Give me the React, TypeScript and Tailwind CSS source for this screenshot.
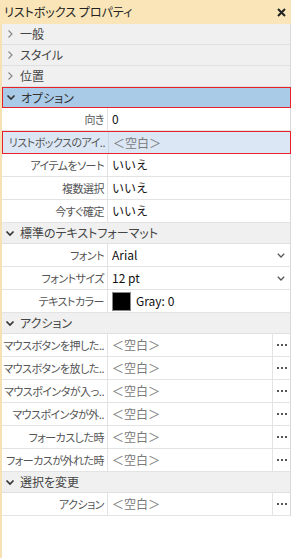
import React from "react";

const font = { fontFamily: '"Noto Sans CJK JP", "Noto Sans", sans-serif' };

function Chevron({ open }: { open: boolean }) {
  return open ? (
    <svg width="10" height="9" viewBox="0 0 10 9" className="shrink-0">
      <path d="M1.5 2.5 L5 6 L8.5 2.5" fill="none" stroke="#333" strokeWidth="1.7" />
    </svg>
  ) : (
    <svg width="10" height="10" viewBox="0 0 10 10" className="shrink-0">
      <path d="M3.5 1.5 L7 5 L3.5 8.5" fill="none" stroke="#8a8a8a" strokeWidth="1.2" />
    </svg>
  );
}

function Header({ title, open, selected }: { title: string; open: boolean; selected?: boolean }) {
  return (
    <div
      className={
        "h-[21px] flex items-center gap-[5px] pl-[3px] text-[12px] leading-none [font-feature-settings:'palt'] " +
        (selected
          ? "bg-[#aacbe7] border border-[#e8202a] text-[#333]"
          : "bg-[#f0f0f0] border-b border-[#e0e0e0] text-[#444] border-r border-r-[#d8d8d8]")
      }
    >
      <Chevron open={open} />
      <span>{title}</span>
    </div>
  );
}

function Dots() {
  return (
    <div className="w-[18px] h-full border-l border-[#e3e3e3] flex items-center justify-center">
      <svg width="10" height="3" viewBox="0 0 10 3">
        <rect x="0" y="0" width="2" height="2" fill="#555" />
        <rect x="4" y="0" width="2" height="2" fill="#555" />
        <rect x="8" y="0" width="2" height="2" fill="#555" />
      </svg>
    </div>
  );
}

function Caret() {
  return (
    <div className="w-[18px] h-full flex items-center justify-center">
      <svg width="8" height="5" viewBox="0 0 8 5">
        <path d="M0.8 0.8 L4 4 L7.2 0.8" fill="none" stroke="#555" strokeWidth="1.3" />
      </svg>
    </div>
  );
}

type RowProps = {
  label: string;
  value?: React.ReactNode;
  empty?: boolean;
  dots?: boolean;
  caret?: boolean;
  selected?: boolean;
};

function Row({ label, value, empty, dots, caret, selected }: RowProps) {
  return (
    <div
      className={
        "h-[23px] flex items-stretch leading-none " +
        (selected
          ? "bg-[#dce7f5] border border-[#e8202a]"
          : "bg-white border-b border-[#e3e3e3] border-r border-r-[#d8d8d8]")
      }
    >
      <div
        className={
          "w-[106px] shrink-0 flex items-center justify-end pr-[3px] text-[11px] tracking-[-0.5px] text-[#555] border-r whitespace-nowrap [font-feature-settings:'palt'] " +
          (selected ? "border-[#c9d5e3]" : "border-[#e3e3e3]")
        }
      >
        {label}
      </div>
      <div className="flex-1 flex items-center pl-[4px] text-[12px] whitespace-nowrap overflow-hidden">
        {empty ? (
          <span className="text-[#7a7a7a]">＜空白＞</span>
        ) : (
          <span className="text-[#111]">{value}</span>
        )}
      </div>
      {dots && <Dots />}
      {caret && <Caret />}
    </div>
  );
}

export default function App() {
  return (
    <div className="w-[291px] h-[558px] bg-white flex flex-col overflow-hidden" style={font}>
      <div className="h-[24px] shrink-0 bg-[#f9e5b8] flex items-center justify-between pl-[4px] pr-[4px]">
        <span className="text-[12px] text-[#222] leading-none [font-feature-settings:'palt']">リストボックス プロパティ</span>
        <svg width="9" height="9" viewBox="0 0 9 9" className="mr-[1px]">
          <path d="M1 1 L8 8 M8 1 L1 8" stroke="#222" strokeWidth="2" />
        </svg>
      </div>
      <div className="flex-1 border-l-2 border-[#f6e1b4] flex flex-col">
        <Header title="一般" open={false} />
        <Header title="スタイル" open={false} />
        <Header title="位置" open={false} />
        <Header title="オプション" open={true} selected />
        <Row label="向き" value="0" />
        <Row label="リストボックスのアイ.." empty selected />
        <Row label="アイテムをソート" value="いいえ" />
        <Row label="複数選択" value="いいえ" />
        <Row label="今すぐ確定" value="いいえ" />
        <Header title="標準のテキストフォーマット" open={true} />
        <Row label="フォント" value="Arial" caret />
        <Row label="フォントサイズ" value="12 pt" caret />
        <Row
          label="テキストカラー"
          value={
            <span className="flex items-center gap-[5px]">
              <span className="w-[19px] h-[19px] bg-black border border-[#888] inline-block" />
              <span>Gray: 0</span>
            </span>
          }
        />
        <Header title="アクション" open={true} />
        <Row label="マウスボタンを押した.." empty dots />
        <Row label="マウスボタンを放した.." empty dots />
        <Row label="マウスポインタが入っ.." empty dots />
        <Row label="マウスポインタが外.." empty dots />
        <Row label="フォーカスした時" empty dots />
        <Row label="フォーカスが外れた時" empty dots />
        <Header title="選択を変更" open={true} />
        <Row label="アクション" empty dots />
      </div>
    </div>
  );
}
